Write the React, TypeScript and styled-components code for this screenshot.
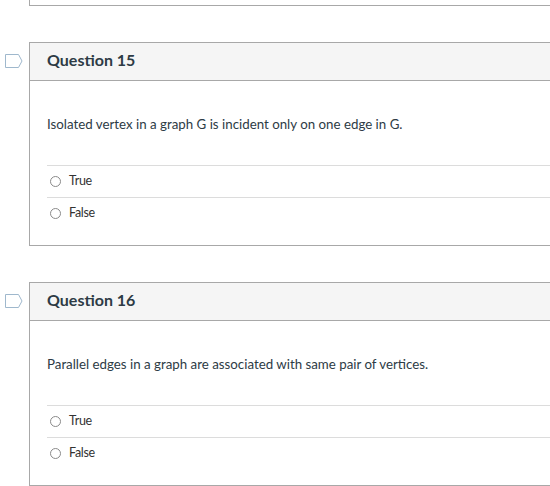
import styled, { createGlobalStyle } from "styled-components";

const GlobalStyle = createGlobalStyle`
    body {
        margin: 0;
        background: #ffffff;
        font-family: Lato, "Liberation Sans", sans-serif;
        color: #2d3b45;
        overflow: hidden;
    }
`;

const Page = styled.div`
    display: flex;
    flex-direction: column;
    gap: 36px;
    width: 560px;
`;

const PrevCardEnd = styled.div`
    margin-left: 29px;
    height: 6px;
    border-left: 1px solid #a8a8a8;
    border-bottom: 1px solid #a8a8a8;
    box-sizing: border-box;
`;

const QuestionRow = styled.div`
    display: flex;
    align-items: flex-start;
`;

const FlagCol = styled.div`
    width: 29px;
    height: 38px;
    display: flex;
    align-items: center;
    padding-left: 5px;
    box-sizing: border-box;
    flex-shrink: 0;
`;

const Card = styled.div`
    flex: 1;
    border: 1px solid #a8a8a8;
    background: #fff;
`;

const Header = styled.div`
    height: 38px;
    background: #f5f5f5;
    border-bottom: 1px solid #a8a8a8;
    display: flex;
    align-items: center;
    padding-left: 17px;
    padding-bottom: 4px;
    box-sizing: border-box;
`;

const Title = styled.div`
    font-size: 16px;
    font-weight: 700;
    color: #2d3b45;
`;

const Body = styled.div`
    padding: 33px 0 16px 17px;
`;

const Prompt = styled.div`
    font-size: 13.3px;
    line-height: 20px;
    color: #2d3b45;
    margin-bottom: 31px;
`;

const Answers = styled.div`
    display: flex;
    flex-direction: column;
`;

const Answer = styled.label`
    display: flex;
    align-items: center;
    height: 31px;
    border-top: 1px solid #dcdcdc;
    padding-left: 3px;
    padding-bottom: 2px;
    box-sizing: content-box;
    height: 29px;
    gap: 8px;
    font-size: 12.5px;
    color: #333;
    letter-spacing: -0.3px;
`;

const Radio = styled.span`
    width: 11px;
    height: 11px;
    border: 1px solid #8a8a8a;
    border-radius: 50%;
    box-sizing: border-box;
    margin-top: 1px;
`;

interface IQuestion {
    id: number;
    prompt: string;
}

const questions: IQuestion[] = [
    { id: 15, prompt: "Isolated vertex in a graph G is incident only on one edge in G." },
    { id: 16, prompt: "Parallel edges in a graph are associated with same pair of vertices." },
];

function Flag() {
    return (
        <svg width="18" height="14" viewBox="0 0 18 14">
            <path d="M0.5 0.5 H13.5 L17 7 L13.5 13.5 H0.5 Z" fill="none" stroke="#9fb8cd" strokeWidth="1" />
        </svg>
    );
}

function QuestionCard({ id, prompt }: IQuestion) {
    return (
        <QuestionRow>
            <FlagCol>
                <Flag />
            </FlagCol>
            <Card>
                <Header>
                    <Title>Question {id}</Title>
                </Header>
                <Body>
                    <Prompt>{prompt}</Prompt>
                    <Answers>
                        {["True", "False"].map((a) => (
                            <Answer key={a}>
                                <Radio />
                                {a}
                            </Answer>
                        ))}
                    </Answers>
                </Body>
            </Card>
        </QuestionRow>
    );
}

export default function App() {
    return (
        <>
            <GlobalStyle />
            <Page>
                <PrevCardEnd />
                {questions.map((q) => (
                    <QuestionCard key={q.id} {...q} />
                ))}
            </Page>
        </>
    );
}
